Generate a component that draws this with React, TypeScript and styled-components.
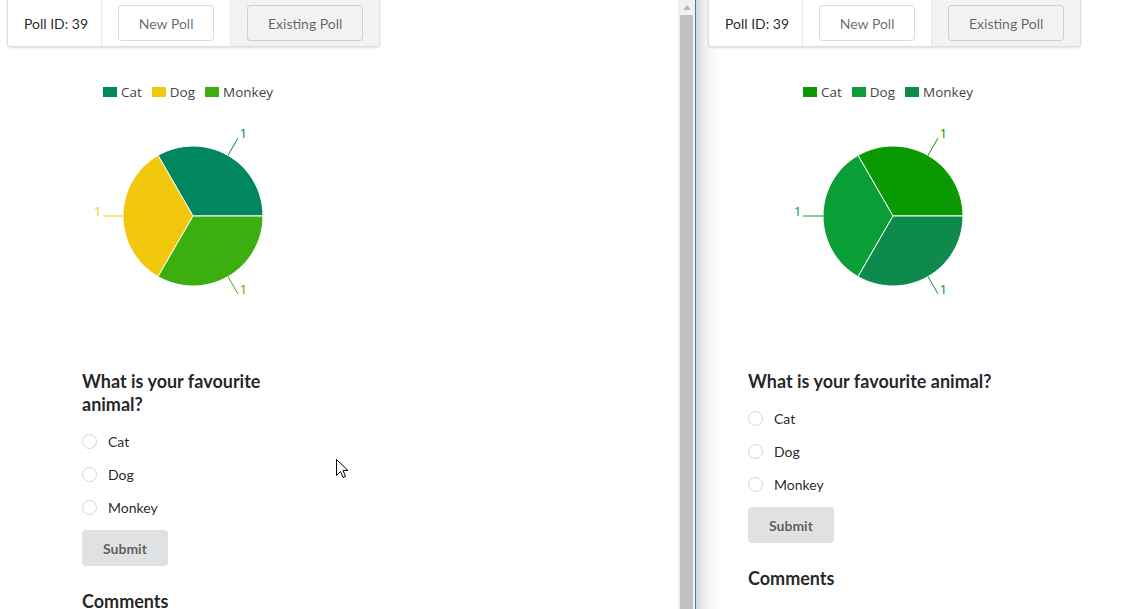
import React from "react";
import styled, { createGlobalStyle } from "styled-components";

const GlobalStyle = createGlobalStyle`
  html, body { margin: 0; padding: 0; background: #fff; }
  body { font-family: Lato, "Open Sans", sans-serif; font-size: 14px; color: rgba(0,0,0,0.87); }
  * { box-sizing: border-box; }
`;

const Page = styled.div`
  display: flex;
  width: 1132px;
  height: 609px;
  overflow: hidden;
`;

const Pane = styled.div<{ $width?: number; $shadow?: boolean }>`
  position: relative;
  flex: ${(p) => (p.$width ? `0 0 ${p.$width}px` : "1 1 auto")};
  display: flex;
  flex-direction: column;
  overflow: hidden;
  background: ${(p) =>
    p.$shadow
      ? "linear-gradient(to right, #d6d6d6 0px, #eeeeee 8px, #f9f9f9 16px, #ffffff 26px)"
      : "#fff"};
  & > * {
    flex-shrink: 0;
  }
`;

const ScrollColumn = styled.div`
  flex: 0 0 18px;
  display: flex;
  flex-direction: column;
  align-items: center;
  background: #f1f1f1;
  border-right: 1px solid #3b7bd4;
  padding-left: 2px;
  padding-right: 2px;
`;

const ScrollArrow = styled.div`
  height: 15px;
  display: flex;
  align-items: center;
  justify-content: center;
  width: 100%;
`;

const ScrollThumb = styled.div`
  flex: 1;
  width: 13px;
  background: #c1c1c1;
`;

const Toolbar = styled.div<{ $indent: number }>`
  display: flex;
  align-self: flex-start;
  margin-left: ${(p) => p.$indent}px;
  margin-top: -1px;
  background: #fff;
  border: 1px solid rgba(34, 36, 38, 0.15);
  border-radius: 0 0 4px 4px;
  box-shadow: 0 1px 2px 0 rgba(34, 36, 38, 0.15);
  overflow: hidden;
`;

const ToolItem = styled.div<{ $active?: boolean; $last?: boolean; $tight?: boolean }>`
  display: flex;
  align-items: center;
  height: 46px;
  padding: 5px ${(p) => (p.$tight ? "13px" : "16px")} 5px 16px;
  background: ${(p) => (p.$active ? "#f2f2f2" : "#fff")};
  border-right: ${(p) => (p.$last ? "none" : "1px solid rgba(34, 36, 38, 0.1)")};
  font-size: 14px;
  color: rgba(0, 0, 0, 0.87);
`;

const BasicButton = styled.button`
  height: 36px;
  padding: 0 20.75px;
  font-family: Lato, sans-serif;
  font-size: 14px;
  font-weight: 400;
  color: rgba(0, 0, 0, 0.6);
  background: transparent;
  border: none;
  border-radius: 4px;
  box-shadow: inset 0 0 0 1px rgba(34, 36, 38, 0.17);
`;

const ChartBlock = styled.div<{ $indent: number }>`
  display: flex;
  flex-direction: column;
  margin-left: ${(p) => p.$indent}px;
  margin-top: 35px;
  width: 220px;
`;

const Legend = styled.ul`
  display: flex;
  align-items: center;
  list-style: none;
  margin: 0 0 0 10px;
  padding: 0;
  height: 20px;
`;

const LegendItem = styled.li`
  display: flex;
  align-items: center;
  margin-right: 10px;
  font-family: "Open Sans", "Noto Sans", sans-serif;
  font-size: 13.5px;
  color: #444;
`;

const Swatch = styled.span<{ $color: string }>`
  display: inline-block;
  width: 14px;
  height: 10px;
  margin-right: 4px;
  background: ${(p) => p.$color};
`;

const PieSvg = styled.svg`
  display: block;
  margin-top: 14px;
  overflow: visible;
`;

const Form = styled.div<{ $indent: number; $maxWidth?: number }>`
  display: flex;
  flex-direction: column;
  align-items: flex-start;
  margin-left: ${(p) => p.$indent}px;
  margin-top: 54px;
  max-width: ${(p) => (p.$maxWidth ? `${p.$maxWidth}px` : "none")};
`;

const Question = styled.h3`
  margin: 0;
  font-family: Lato, sans-serif;
  font-size: 18px;
  line-height: 23px;
  font-weight: 700;
  color: rgba(0, 0, 0, 0.87);
`;

const Options = styled.div`
  display: flex;
  flex-direction: column;
  gap: 16px;
  margin-top: 16.5px;
`;

const Option = styled.label`
  display: flex;
  align-items: center;
  height: 17px;
  font-size: 14px;
  color: rgba(0, 0, 0, 0.87);
`;

const Radio = styled.span`
  width: 15px;
  height: 15px;
  border-radius: 50%;
  border: 1px solid #d4d4d5;
  background: #fff;
  margin-right: 11px;
`;

const SubmitButton = styled.button`
  margin-top: 14.5px;
  height: 36px;
  padding: 0 21px;
  font-family: Lato, sans-serif;
  font-size: 14px;
  font-weight: 700;
  color: rgba(0, 0, 0, 0.6);
  background: #e0e1e2;
  border: none;
  border-radius: 4px;
`;

const SectionTitle = styled(Question)`
  margin-top: 23.5px;
`;

const Cursor = styled.svg`
  position: absolute;
  left: 336px;
  top: 459px;
`;

type Slice = { name: string; color: string };

const leftSlices: Slice[] = [
  { name: "Cat", color: "#01875f" },
  { name: "Dog", color: "#f2c80f" },
  { name: "Monkey", color: "#3dae10" },
];

const rightSlices: Slice[] = [
  { name: "Cat", color: "#089a00" },
  { name: "Dog", color: "#0c9e36" },
  { name: "Monkey", color: "#0d8a4c" },
];

const PieChart: React.FC<{ slices: Slice[] }> = ({ slices }) => {
  const cx = 100;
  const cy = 100;
  const r = 70;
  const pt = (deg: number, rad: number) => {
    const a = (deg * Math.PI) / 180;
    return [cx + rad * Math.cos(a), cy - rad * Math.sin(a)];
  };
  const step = 360 / slices.length;
  return (
    <PieSvg width={200} height={200} viewBox="0 0 200 200">
      {slices.map((s, i) => {
        const a0 = i * step;
        const a1 = (i + 1) * step;
        const [x0, y0] = pt(a0, r);
        const [x1, y1] = pt(a1, r);
        return (
          <path
            key={s.name}
            d={`M${cx},${cy} L${x0},${y0} A${r},${r} 0 0 0 ${x1},${y1} Z`}
            fill={s.color}
            stroke="#fff"
            strokeWidth={1}
          />
        );
      })}
      {slices.map((s, i) => {
        const mid = i * step + step / 2;
        const [lx0, ly0] = pt(mid, r);
        const [lx1, ly1] = pt(mid, r + 20);
        const right = lx1 > cx + 1;
        const left = lx1 < cx - 1;
        return (
          <g key={s.name + "-label"}>
            <path d={`M${lx0},${ly0} L${lx1},${ly1}`} stroke={s.color} strokeWidth={1} fill="none" />
            <text
              x={right ? lx1 + 1.5 : left ? lx1 - 1.5 : lx1}
              y={ly1}
              textAnchor={right ? "start" : left ? "end" : "middle"}
              fill={s.color}
              fontFamily="'Open Sans', 'Noto Sans', sans-serif"
              fontSize={13.5}
            >
              1
            </text>
          </g>
        );
      })}
    </PieSvg>
  );
};

const PollView: React.FC<{
  slices: Slice[];
  toolbarIndent: number;
  chartIndent: number;
  formIndent: number;
  formMaxWidth?: number;
}> = ({ slices, toolbarIndent, chartIndent, formIndent, formMaxWidth }) => (
  <>
    <Toolbar $indent={toolbarIndent}>
      <ToolItem $tight>Poll ID: 39</ToolItem>
      <ToolItem>
        <BasicButton>New Poll</BasicButton>
      </ToolItem>
      <ToolItem $active $last>
        <BasicButton>Existing Poll</BasicButton>
      </ToolItem>
    </Toolbar>
    <ChartBlock $indent={chartIndent}>
      <Legend>
        {slices.map((s) => (
          <LegendItem key={s.name}>
            <Swatch $color={s.color} />
            {s.name}
          </LegendItem>
        ))}
      </Legend>
      <PieChart slices={slices} />
    </ChartBlock>
    <Form $indent={formIndent} $maxWidth={formMaxWidth}>
      <Question>What is your favourite animal?</Question>
      <Options>
        {slices.map((s) => (
          <Option key={s.name}>
            <Radio />
            {s.name}
          </Option>
        ))}
      </Options>
      <SubmitButton>Submit</SubmitButton>
      <SectionTitle>Comments</SectionTitle>
    </Form>
  </>
);

export default function App() {
  return (
    <>
      <GlobalStyle />
      <Page>
        <Pane $width={678}>
          <PollView
            slices={leftSlices}
            toolbarIndent={7}
            chartIndent={93}
            formIndent={82}
            formMaxWidth={205}
          />
          <Cursor width="13" height="21" viewBox="0 0 13 21">
            <path
              d="M0.5 0.5 L0.5 16.5 L4.5 12.5 L7 18.5 L9.5 17.5 L7 11.5 L12 11.5 Z"
              fill="#fff"
              stroke="#000"
              strokeWidth={1}
              strokeLinejoin="miter"
            />
          </Cursor>
        </Pane>
        <ScrollColumn>
          <ScrollArrow>
            <svg width="8" height="5" viewBox="0 0 8 5">
              <path d="M4 0 L8 5 L0 5 Z" fill="#a3c9a3" />
            </svg>
          </ScrollArrow>
          <ScrollThumb />
        </ScrollColumn>
        <Pane $shadow>
          <PollView
            slices={rightSlices}
            toolbarIndent={12}
            chartIndent={97}
            formIndent={52}
          />
        </Pane>
      </Page>
    </>
  );
}
